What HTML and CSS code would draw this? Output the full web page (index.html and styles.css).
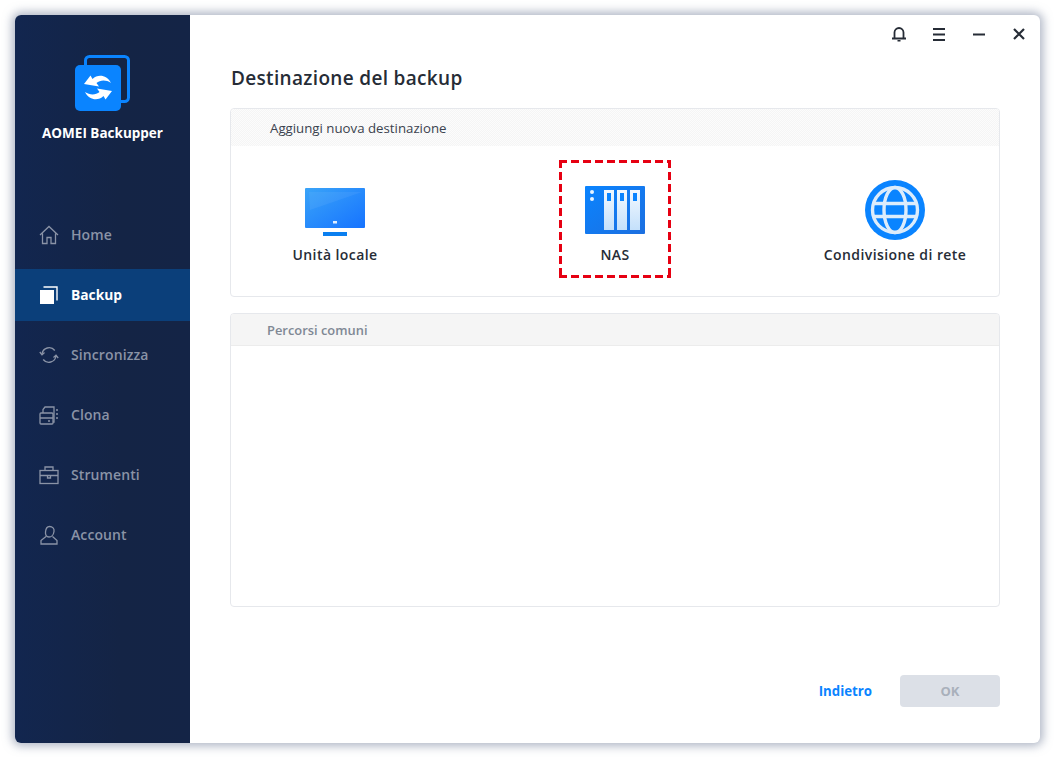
FILE: index.html
```html
<!DOCTYPE html>
<html lang="it">
<head>
<meta charset="utf-8">
<title>AOMEI Backupper</title>
<link rel="stylesheet" href="styles.css">
</head>
<body>
<div class="window">
  <aside class="sidebar">
    <div class="brand">
      <svg class="brand-logo" width="60" height="60" viewBox="0 0 60 60">
        <path d="M12.500 12V7.500a4 4 0 0 1 4-4h35a4 4 0 0 1 4 4v37a4 4 0 0 1-4 4H48" fill="none" stroke="#0a84ff" stroke-width="3"/>
        <rect x="2" y="12" width="46" height="46" rx="5" fill="#0a84ff"/>
        <path d="M11 31L17.500 22.500 19.500 26C25 20.500 34 22 38 30 33 26.500 27 27 23.500 30L26 33.500Z" fill="#fff"/>
        <path d="M39 38L32.500 46.500 30.500 43C25 48.500 16 47 12 39 17 42.500 23 42 26.500 39L24 35.500Z" fill="#fff"/>
      </svg>
      <div class="brand-name">AOMEI Backupper</div>
    </div>
    <nav class="nav">
      <a class="nav-item">
        <svg width="20" height="20" viewBox="0 0 20 20" fill="none" stroke="currentColor" stroke-width="1.300"><path d="M1 10l9-8.500 9 8.500M3.500 8.500V18.500h4.500v-6h4v6h4.500V8.500"/></svg>
        <span>Home</span>
      </a>
      <a class="nav-item active">
        <svg width="20" height="20" viewBox="0 0 20 20"><rect x="1" y="5" width="14" height="14" fill="#fff"/><path d="M4.500 2h13.500v13.500" fill="none" stroke="#fff" stroke-width="1.400"/></svg>
        <span>Backup</span>
      </a>
      <a class="nav-item">
        <svg width="20" height="20" viewBox="0 0 20 20" fill="none" stroke="currentColor" stroke-width="1.300"><path d="M3 9a7.200 7.200 0 0 1 12.800-3.500M17 11a7.200 7.200 0 0 1-12.800 3.500"/><path d="M.8 7l2.200 2.800L5.500 7.500M19.200 13L17 10.200l-2.500 2.300"/></svg>
        <span>Sincronizza</span>
      </a>
      <a class="nav-item">
        <svg width="20" height="20" viewBox="0 0 20 20" fill="none" stroke="currentColor" stroke-width="1.300"><rect x="1" y="8" width="13" height="11" rx="1"/><path d="M1 13h13M9 16h2M4 8V4.500L6 2h9v15h-1M17 5h2M17 9h2M17 13h2"/></svg>
        <span>Clona</span>
      </a>
      <a class="nav-item">
        <svg width="20" height="20" viewBox="0 0 20 20" fill="none" stroke="currentColor" stroke-width="1.300"><rect x="1" y="5.500" width="18" height="13"/><path d="M1 10.500h18M6 5.500V2h8v3.500M8.500 10.500h3v2.500h-3z"/></svg>
        <span>Strumenti</span>
      </a>
      <a class="nav-item">
        <svg width="20" height="20" viewBox="0 0 20 20" fill="none" stroke="currentColor" stroke-width="1.300"><path d="M10.500 1.500c3 0 5 2 4.500 5-.4 3-2.500 5.500-5 5.500-2.600 0-3.800-2-3.500-5 .3-3.500 1.800-5.500 4-5.500zM7 11.500L2 15.500v3.500h16v-3.500l-4.500-4"/></svg>
        <span>Account</span>
      </a>
    </nav>
  </aside>
  <main class="main">
    <div class="topbar">
      <span class="tool"><svg width="16" height="16" viewBox="0 0 16 16" fill="none" stroke="#262c36" stroke-width="1.800"><path d="M3.500 12V6.500a4.500 4.500 0 0 1 9 0V12M1 12.500h14"/><path d="M6.500 14.700h3" stroke-width="1.500"/></svg></span>
      <span class="tool"><svg width="14" height="14" viewBox="0 0 14 14" stroke="#262c36" stroke-width="2"><path d="M1 2h12M1 7.500h12M1 13h12"/></svg></span>
      <span class="tool"><svg width="14" height="14" viewBox="0 0 14 14" stroke="#262c36" stroke-width="2"><path d="M1 7.500h12"/></svg></span>
      <span class="tool"><svg width="14" height="14" viewBox="0 0 14 14" stroke="#262c36" stroke-width="2.200"><path d="M2 2l10 10M12 2L2 12"/></svg></span>
    </div>
    <h1 class="title">Destinazione del backup</h1>
    <section class="card">
      <div class="card-head dotted">Aggiungi nuova destinazione</div>
      <div class="dests">
        <div class="dest">
          <div class="tile">
            <svg width="60" height="60" viewBox="0 0 60 60">
              <defs><linearGradient id="mon" x1="0" y1="0" x2="1" y2="1"><stop offset="0" stop-color="#3aa4f8"/><stop offset="1" stop-color="#1673ff"/></linearGradient></defs>
              <rect y="8" width="60" height="40" rx="1" fill="url(#mon)"/>
              <path d="M4 12h53L5 30z" fill="#fff" opacity=".06"/>
              <rect x="28" y="41" width="4" height="2.500" fill="#dfeeff"/>
              <rect x="18" y="52" width="24" height="4" fill="#0a7ff0"/>
            </svg>
            <div class="tile-label">Unità locale</div>
          </div>
        </div>
        <div class="dest">
          <div class="tile selected">
            <svg width="60" height="60" viewBox="0 0 60 60">
              <defs>
                <linearGradient id="nas" x1="0" y1="0" x2="1" y2="1"><stop offset="0" stop-color="#0a84ff"/><stop offset="1" stop-color="#1c6fe0"/></linearGradient>
                <linearGradient id="bay" x1="0" y1="0" x2="0" y2="1"><stop offset="0" stop-color="#f3f9ff"/><stop offset="1" stop-color="#c4e0fb"/></linearGradient>
              </defs>
              <rect y="6" width="60" height="48" rx="1" fill="url(#nas)"/>
              <circle cx="7" cy="12" r="2" fill="#e8f4ff"/><circle cx="7" cy="19" r="2" fill="#e8f4ff"/>
              <rect x="19" y="10" width="10" height="40" fill="url(#bay)"/><rect x="32" y="10" width="10" height="40" fill="url(#bay)"/><rect x="45" y="10" width="10" height="40" fill="url(#bay)"/>
              <rect x="22" y="13" width="4" height="8" fill="#0a84ff"/><rect x="35" y="13" width="4" height="8" fill="#0a84ff"/><rect x="48" y="13" width="4" height="8" fill="#0a84ff"/>
            </svg>
            <div class="tile-label">NAS</div>
          </div>
        </div>
        <div class="dest">
          <div class="tile">
            <svg width="60" height="60" viewBox="0 0 60 60">
              <circle cx="30" cy="30" r="30" fill="#0a84ff"/>
              <g fill="none" stroke="#dcecfb" stroke-width="3.400">
                <circle cx="30" cy="30" r="22.500"/>
                <ellipse cx="30" cy="30" rx="11" ry="22.500"/>
                <path d="M8 23.500h44M8 36.500h44"/>
              </g>
            </svg>
            <div class="tile-label">Condivisione di rete</div>
          </div>
        </div>
      </div>
    </section>
    <section class="card card-paths">
      <div class="card-head plain">Percorsi comuni</div>
    </section>
    <div class="footer">
      <a class="link-back">Indietro</a>
      <button class="btn-ok" disabled>OK</button>
    </div>
  </main>
</div>
</body>
</html>
```
FILE: styles.css
```css
* { box-sizing: border-box; }
html, body { margin: 0; height: 100%; background: #fff; }
body {
  padding: 15px;
  font-family: "Open Sans", "Noto Sans", "Liberation Sans", sans-serif;
  overflow: hidden;
}
.window {
  display: flex;
  width: 1025px;
  height: 728px;
  border-radius: 6px;
  box-shadow: 0 0 10px 3px rgba(110,122,150,.55);
  overflow: hidden;
  background: #fff;
}
.sidebar {
  width: 175px;
  flex: none;
  background: linear-gradient(to right, #12264f, #142445 60%, #142446);
  display: flex;
  flex-direction: column;
}
.brand {
  height: 194px;
  padding-top: 38px;
  display: flex;
  flex-direction: column;
  align-items: center;
}
.brand-logo { display: block; }
.brand-name {
  margin-top: 10px;
  color: #fff;
  font-size: 13.500px;
  font-weight: 700;
  line-height: 20px;
  white-space: nowrap;
}
.nav { display: flex; flex-direction: column; gap: 8px; }
.nav-item {
  height: 52px;
  padding-left: 24px;
  display: flex;
  align-items: center;
  gap: 12px;
  color: #8a93a6;
  font-size: 14px;
  font-weight: 600;
  letter-spacing: .1px;
}
.nav-item span { padding-bottom: 2px; }
.nav-item svg { flex: none; }
.nav-item.active { background: #0b3f7a; color: #fff; font-weight: 700; font-size: 13.800px; letter-spacing: 0; }
.main {
  flex: 1;
  min-width: 0;
  padding: 0 40px 36px;
  display: flex;
  flex-direction: column;
}
.topbar {
  display: flex;
  justify-content: flex-end;
  height: 38px;
  margin: 0 -39px 10px 0;
}
.tool {
  width: 40px;
  display: flex;
  align-items: center;
  justify-content: center;
}
.title {
  margin: 0 0 15px 1px;
  font-size: 19px;
  font-weight: 600;
  line-height: 30px;
  letter-spacing: .33px;
  color: #262c36;
}
.card {
  border: 1px solid #e6e8ec;
  border-radius: 4px;
  overflow: hidden;
}
.card-head {
  height: 37px;
  display: flex;
  align-items: center;
}
.dotted {
  padding: 0 0 0 39px;
  font-size: 13.250px;
  color: #3b424e;
  background: repeating-conic-gradient(#f5f5f5 0 25%, #fcfcfc 0 50%) 0 0 / 2px 2px;
}
.plain {
  height: 32px;
  padding: 0 0 0 36px;
  font-size: 12.900px;
  color: #7f8894;
  font-weight: 600;
  background: #f5f5f5;
  border-bottom: 1px solid #ececec;
}
.dests {
  height: 150px;
  margin: 0 -1px;
  padding-top: 14px;
  display: flex;
  justify-content: space-between;
}
.dest {
  width: 210px;
  display: flex;
  justify-content: center;
}
.tile {
  width: 112px;
  height: 118px;
  padding-top: 17px;
  border: 3px solid transparent;
  display: flex;
  flex-direction: column;
  align-items: center;
}
.tile.selected {
  background-origin: border-box;
  background-image:
    linear-gradient(to right, #e60012 8px, transparent 8px),
    linear-gradient(to right, #e60012 8px, transparent 8px),
    linear-gradient(to bottom, #e60012 8px, transparent 8px),
    linear-gradient(to bottom, #e60012 8px, transparent 8px);
  background-size: 12px 3px, 12px 3px, 3px 12px, 3px 12px;
  background-position: 0 0, 0 100%, 0 0, 100% 0;
  background-repeat: repeat-x, repeat-x, repeat-y, repeat-y;
}
.tile svg { display: block; flex: none; }
.tile-label {
  margin-top: 5px;
  font-size: 14px;
  font-weight: 600;
  line-height: 20px;
  letter-spacing: .42px;
  color: #262c36;
  white-space: nowrap;
}
.card-paths { height: 294px; margin-top: 16px; }
.footer {
  margin-top: 68px;
  display: flex;
  align-items: center;
  justify-content: flex-end;
  gap: 28px;
}
.link-back { color: #0a84ff; font-size: 13.250px; font-weight: 700; }
.btn-ok {
  width: 100px;
  height: 32px;
  border: 0;
  border-radius: 4px;
  background: #dce0e7;
  color: #a9b0bb;
  font-family: inherit;
  font-size: 13px;
  font-weight: 700;
}
```
